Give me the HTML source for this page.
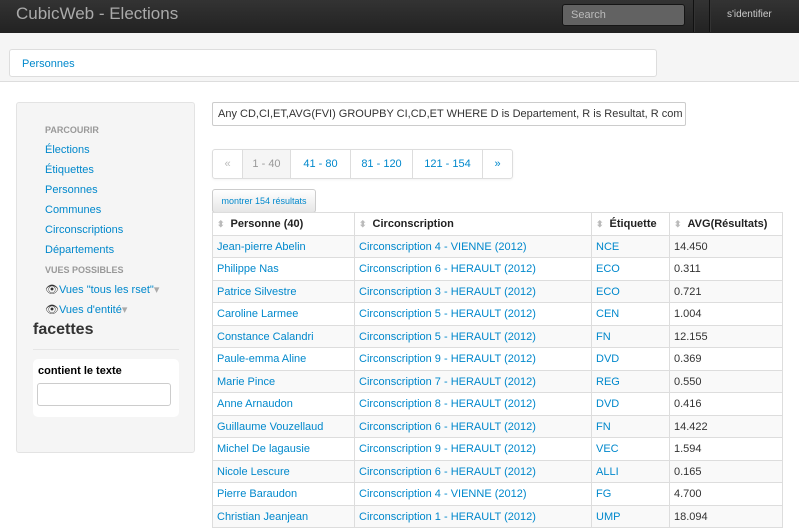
<!DOCTYPE html>
<html><head><meta charset="utf-8"><style>
body{margin:0;width:799px;height:526px;overflow:hidden;background:#fff;font-family:"Liberation Sans",sans-serif;font-size:11px;color:#333;position:relative}
a{color:#0088cc;text-decoration:none}
.nav{position:absolute;left:0;top:0;width:799px;height:33px;background:linear-gradient(#333,#222);box-shadow:0 1px 3px rgba(0,0,0,.4)}
.brand{position:absolute;left:16px;top:4px;font-size:17px;color:#aaa}
.search{position:absolute;left:562px;top:4px;background:#626262;border:1px solid #151515;border-radius:3px;color:#bbb;font-size:11px;line-height:20px;padding-left:8px;box-sizing:border-box;width:123px;height:22px}
.div{position:absolute;top:0;width:1px;height:32px;background:#111;border-right:1px solid #333}
.ident{position:absolute;left:727px;top:9px;color:#ccc;font-size:10px}
.band{position:absolute;left:0;top:33px;width:799px;height:48px;background:#f5f5f5;border-bottom:1px solid #ddd}
.bc{position:absolute;left:9px;top:49px;width:646px;height:26px;background:#fff;border:1px solid #ddd;border-radius:3px}
.bc a{position:absolute;left:12px;top:8px}
.well{position:absolute;left:16px;top:102px;width:177px;height:349px;background:#f5f5f5;border:1px solid #e3e3e3;border-radius:3px}
.hd{position:absolute;left:28px;font-size:9px;font-weight:bold;color:#999}
.lk{position:absolute;left:28px}
.fac{position:absolute;left:16px;top:218px;font-size:16px;font-weight:bold;color:#333}
.hr{position:absolute;left:16px;top:246px;width:146px;height:1px;background:#e5e5e5}
.fb{position:absolute;left:16px;top:256px;width:146px;height:58px;background:#fff;border-radius:5px}
.fb b{position:absolute;left:5px;top:6px;color:#000;font-size:11px}
.fb i{position:absolute;left:4px;top:24px;width:132px;height:21px;border:1px solid #ccc;border-radius:3px}
.q{position:absolute;left:212px;top:102px;width:474px;height:24px;border:1px solid #ccc;border-radius:2px;box-sizing:border-box;font-size:11px;line-height:23px;padding-left:5px;color:#333;white-space:nowrap;overflow:hidden}
.pg{position:absolute;left:212px;top:149px;height:28px;border:1px solid #ddd;border-radius:3px;display:flex;box-shadow:0 1px 2px rgba(0,0,0,.05)}
.pg span{height:28px;line-height:28px;border-right:1px solid #ddd;text-align:center;color:#08c;font-size:11px}
.btn{position:absolute;left:212px;top:189px;width:102px;height:22px;border:1px solid #ccc;border-radius:3px;background:linear-gradient(#fff,#e6e6e6);font-size:9px;color:#08c;line-height:22px;text-align:center}
table{position:absolute;left:212px;top:212px;border-collapse:collapse;border:1px solid #ddd;width:571px}
td,th{border:1px solid #ddd;height:21.5px;padding:0 4px;text-align:left;font-size:11px;white-space:nowrap}
td{padding-top:1px;height:20.5px}
th{font-weight:bold;color:#222;background:#fff}
th s{text-decoration:none;color:#bbb;font-size:9px;margin-right:6px}
tr:nth-child(even) td{background:#f9f9f9}
</style></head><body>
<div class="nav"><div class="brand">CubicWeb - Elections</div><div class="search">Search</div><div class="div" style="left:693px"></div><div class="div" style="left:709px"></div><div class="ident">s'identifier</div></div>
<div class="band"></div>
<div class="bc"><a>Personnes</a></div>
<div class="well">
<div class="hd" style="top:22px">PARCOURIR</div>
<a class="lk" style="top:41px">Élections</a>
<a class="lk" style="top:61px">Étiquettes</a>
<a class="lk" style="top:81px">Personnes</a>
<a class="lk" style="top:101px">Communes</a>
<a class="lk" style="top:121px">Circonscriptions</a>
<a class="lk" style="top:141px">Départements</a>
<div class="hd" style="top:162px">VUES POSSIBLES</div>
<a class="lk" style="top:180px"><span style="color:#333">👁</span>Vues "tous les rset"<span style="color:#aaa">▾</span></a>
<a class="lk" style="top:200px"><span style="color:#333">👁</span>Vues d'entité<span style="color:#aaa">▾</span></a>
<div class="fac">facettes</div><div class="hr"></div>
<div class="fb"><b>contient le texte</b><i></i></div>
</div>
<div class="q">Any CD,CI,ET,AVG(FVI) GROUPBY CI,CD,ET WHERE D is Departement, R is Resultat, R com</div>
<div class="pg"><span style="width:29px;color:#bbb">«</span><span style="width:47px;color:#999;background:#f5f5f5">1 - 40</span><span style="width:59px">41 - 80</span><span style="width:61px">81 - 120</span><span style="width:69px">121 - 154</span><span style="width:29px;border:0">»</span></div>
<div class="btn">montrer 154 résultats</div>
<table>
<tr><th style="width:133px"><s>⬍</s>Personne (40)</th><th style="width:228px"><s>⬍</s>Circonscription</th><th style="width:69px"><s>⬍</s>Étiquette</th><th><s>⬍</s>AVG(Résultats)</th></tr>
<tr><td><a>Jean-pierre Abelin</a></td><td><a>Circonscription 4 - VIENNE (2012)</a></td><td><a>NCE</a></td><td>14.450</td></tr>
<tr><td><a>Philippe Nas</a></td><td><a>Circonscription 6 - HERAULT (2012)</a></td><td><a>ECO</a></td><td>0.311</td></tr>
<tr><td><a>Patrice Silvestre</a></td><td><a>Circonscription 3 - HERAULT (2012)</a></td><td><a>ECO</a></td><td>0.721</td></tr>
<tr><td><a>Caroline Larmee</a></td><td><a>Circonscription 5 - HERAULT (2012)</a></td><td><a>CEN</a></td><td>1.004</td></tr>
<tr><td><a>Constance Calandri</a></td><td><a>Circonscription 5 - HERAULT (2012)</a></td><td><a>FN</a></td><td>12.155</td></tr>
<tr><td><a>Paule-emma Aline</a></td><td><a>Circonscription 9 - HERAULT (2012)</a></td><td><a>DVD</a></td><td>0.369</td></tr>
<tr><td><a>Marie Pince</a></td><td><a>Circonscription 7 - HERAULT (2012)</a></td><td><a>REG</a></td><td>0.550</td></tr>
<tr><td><a>Anne Arnaudon</a></td><td><a>Circonscription 8 - HERAULT (2012)</a></td><td><a>DVD</a></td><td>0.416</td></tr>
<tr><td><a>Guillaume Vouzellaud</a></td><td><a>Circonscription 6 - HERAULT (2012)</a></td><td><a>FN</a></td><td>14.422</td></tr>
<tr><td><a>Michel De lagausie</a></td><td><a>Circonscription 9 - HERAULT (2012)</a></td><td><a>VEC</a></td><td>1.594</td></tr>
<tr><td><a>Nicole Lescure</a></td><td><a>Circonscription 6 - HERAULT (2012)</a></td><td><a>ALLI</a></td><td>0.165</td></tr>
<tr><td><a>Pierre Baraudon</a></td><td><a>Circonscription 4 - VIENNE (2012)</a></td><td><a>FG</a></td><td>4.700</td></tr>
<tr><td><a>Christian Jeanjean</a></td><td><a>Circonscription 1 - HERAULT (2012)</a></td><td><a>UMP</a></td><td>18.094</td></tr>
</table>
</body></html>
